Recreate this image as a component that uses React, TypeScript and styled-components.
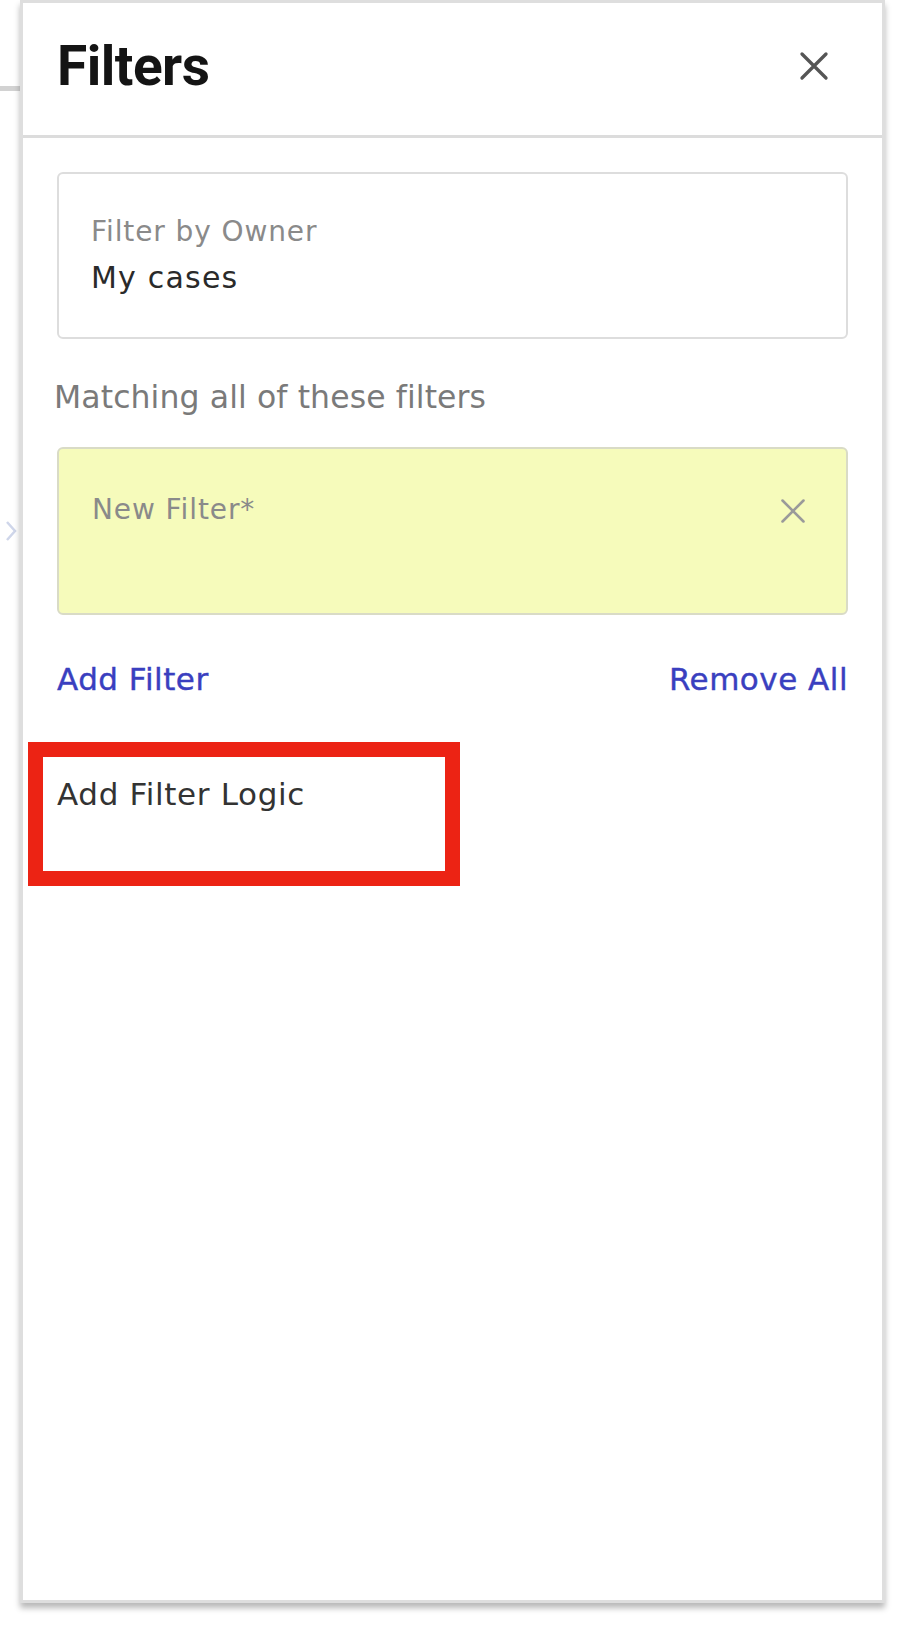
import styled, { createGlobalStyle } from "styled-components";

const GlobalStyle = createGlobalStyle`
  * {
    box-sizing: border-box;
  }
  body {
    margin: 0;
    background: #fff;
    font-family: "DejaVu Sans", "Liberation Sans", sans-serif;
  }
`;

const Page = styled.div`
  display: flex;
  height: 1630px;
  overflow: hidden;
`;

const Gutter = styled.div`
  width: 20px;
  flex-shrink: 0;
  display: flex;
  flex-direction: column;
  align-items: flex-start;
`;

const Dash = styled.div`
  margin-top: 86px;
  width: 20px;
  height: 5px;
  background: #d2d2d2;
`;

const Chevron = styled.svg`
  margin-top: 429px;
  margin-left: 5px;
`;

const Panel = styled.aside`
  width: 865px;
  height: 1603px;
  border: 3px solid #dedede;
  background: #fff;
  box-shadow: 0 5px 6px rgba(0, 0, 0, 0.28);
  display: flex;
  flex-direction: column;
`;

const Header = styled.header`
  height: 135px;
  padding: 31px 52px 0 34px;
  border-bottom: 3px solid #dcdcdc;
  display: flex;
  justify-content: space-between;
  align-items: flex-start;
`;

const Title = styled.h1`
  margin: 0;
  font-family: Roboto, "Liberation Sans", sans-serif;
  font-weight: 700;
  font-size: 55px;
  line-height: 64px;
  color: #141414;
  letter-spacing: -0.5px;
`;

const IconButton = styled.button<{ $size: number }>`
  border: 0;
  padding: 0;
  background: none;
  height: ${(p) => p.$size}px;
  display: flex;
  align-items: center;
  cursor: pointer;
`;

const Body = styled.div`
  padding: 34px 34px 0;
  display: flex;
  flex-direction: column;
`;

const Card = styled.div<{ $tone: "plain" | "new" }>`
  border: 2px solid ${(p) => (p.$tone === "new" ? "#d9dbc6" : "#dddddd")};
  border-radius: 6px;
  background: ${(p) => (p.$tone === "new" ? "#f6fbbb" : "#fff")};
`;

const OwnerCard = styled(Card)`
  padding: 41px 32px;
  display: flex;
  flex-direction: column;
  gap: 11px;
`;

const FilterCard = styled(Card)`
  margin-top: 31px;
  height: 168px;
  padding: 44px 39px 0 33px;
  display: flex;
  justify-content: space-between;
  align-items: flex-start;
`;

const Caption = styled.div`
  font-size: 28px;
  line-height: 34px;
  letter-spacing: 0.9px;
  color: #8a8a8a;
`;

const Value = styled.div`
  font-size: 30px;
  line-height: 36px;
  letter-spacing: 1.2px;
  color: #2a2a2a;
`;

const SectionLabel = styled.div`
  margin-top: 39px;
  margin-left: -3px;
  font-size: 31.5px;
  line-height: 38px;
  letter-spacing: 0.1px;
  color: #7a7a7a;
`;

const LinkRow = styled.div`
  margin-top: 46px;
  display: flex;
  justify-content: space-between;
`;

const Link = styled.a`
  font-size: 31px;
  line-height: 36px;
  letter-spacing: 0.5px;
  color: #3a3fbf;
  -webkit-text-stroke: 0.4px #3a3fbf;
  text-decoration: none;
  cursor: pointer;
`;

const LogicRow = styled.div`
  margin-top: 79px;
  position: relative;
  font-size: 31px;
  line-height: 36px;
  letter-spacing: 0.65px;
  color: #333;
`;

const Highlight = styled.div`
  position: absolute;
  left: -29px;
  top: -34px;
  width: 432px;
  height: 144px;
  border: 15px solid #ec2314;
  pointer-events: none;
`;

function Cross({ size, color, width }: { size: number; color: string; width: number }) {
  return (
    <svg width={size} height={size} viewBox="0 0 24 24" fill="none">
      <path d="M3 3L21 21M21 3L3 21" stroke={color} strokeWidth={width} strokeLinecap="round" />
    </svg>
  );
}

export default function App() {
  return (
    <Page>
      <GlobalStyle />
      <Gutter>
        <Dash />
        <Chevron width="12" height="22" viewBox="0 0 12 22">
          <polyline points="2,2 10,11 2,20" fill="none" stroke="#cfd6ea" strokeWidth="2.5" />
        </Chevron>
      </Gutter>
      <Panel>
        <Header>
          <Title>Filters</Title>
          <IconButton $size={64} aria-label="Close">
            <Cross size={32} color="#555" width={2.5} />
          </IconButton>
        </Header>
        <Body>
          <OwnerCard $tone="plain">
            <Caption>Filter by Owner</Caption>
            <Value>My cases</Value>
          </OwnerCard>
          <SectionLabel>Matching all of these filters</SectionLabel>
          <FilterCard $tone="new">
            <Caption>New Filter*</Caption>
            <IconButton $size={36} aria-label="Remove filter">
              <Cross size={28} color="#9a9a9a" width={2.2} />
            </IconButton>
          </FilterCard>
          <LinkRow>
            <Link>Add Filter</Link>
            <Link>Remove All</Link>
          </LinkRow>
          <LogicRow>
            Add Filter Logic
            <Highlight />
          </LogicRow>
        </Body>
      </Panel>
    </Page>
  );
}
